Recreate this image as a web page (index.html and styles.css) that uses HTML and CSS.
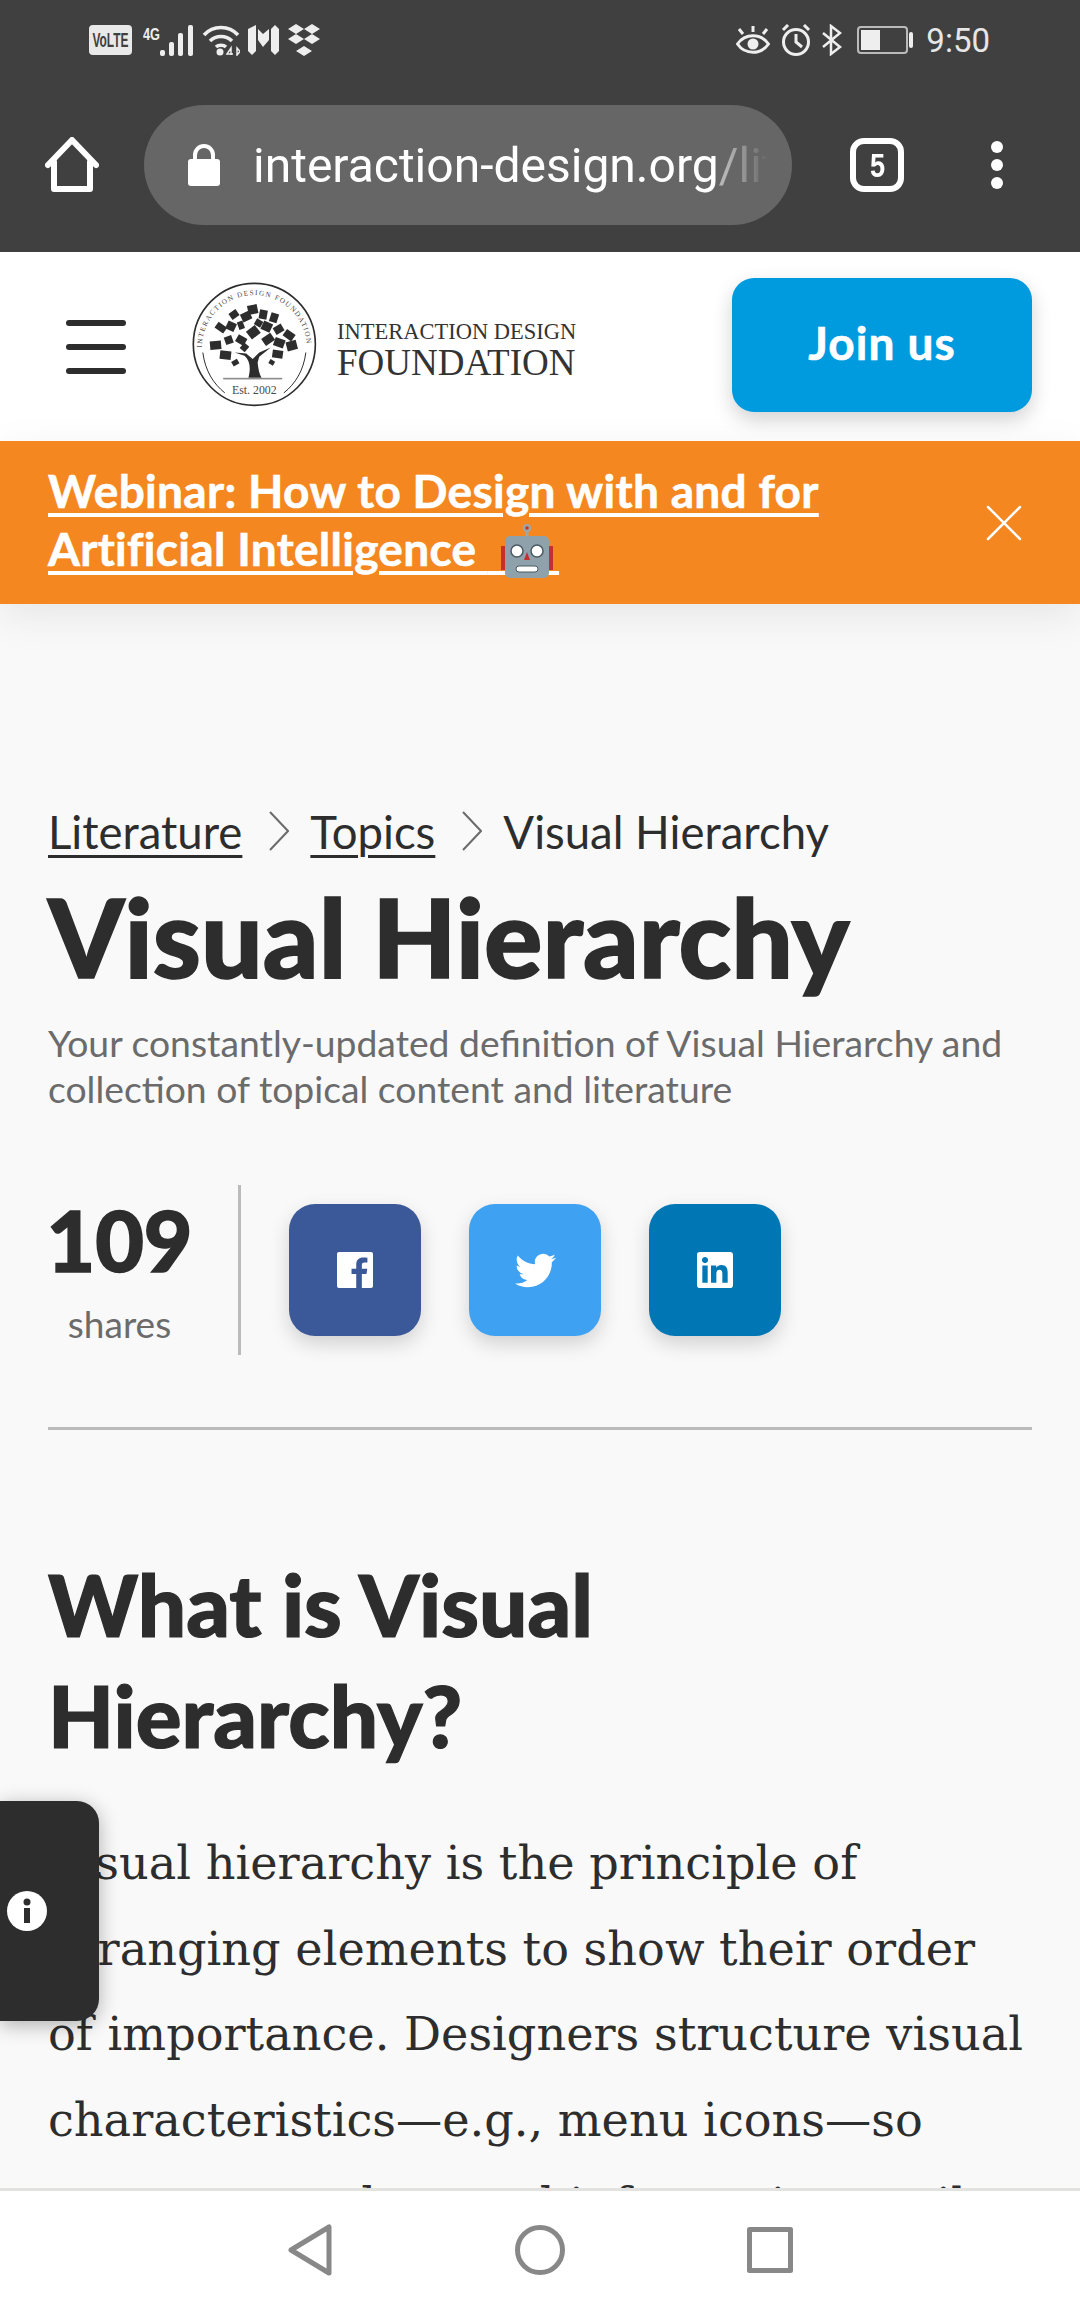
FILE: index.html
```html
<!DOCTYPE html>
<html lang="en">
<head>
  <meta charset="UTF-8">
  <title>Visual Hierarchy</title>
  <link rel="stylesheet" href="styles.css">
</head>
<body>

<div class="chrome">
  <div class="status-bar">
    <div class="status-left">
      <svg class="ico-volte" width="43" height="30" viewBox="0 0 43 30"><rect width="43" height="30" rx="4" fill="#e9e9e9"/><text x="21.5" y="22" text-anchor="middle" textLength="36" lengthAdjust="spacingAndGlyphs" class="volte-text">VoLTE</text></svg>
      <svg class="ico-signal" width="51" height="32" viewBox="0 0 51 32"><text x="0" y="16" textLength="17" lengthAdjust="spacingAndGlyphs" class="net-text">4G</text><rect x="17" y="26" width="5" height="6" rx="2" fill="#eee"/><rect x="26" y="18" width="5" height="14" rx="2" fill="#eee"/><rect x="35" y="9" width="5" height="23" rx="2" fill="#eee"/><rect x="45" y="1" width="5" height="31" rx="2" fill="#eee"/></svg>
      <svg class="ico-wifi" width="38" height="32" viewBox="0 0 38 32" fill="none" stroke="#eee" stroke-width="3.5"><path d="M2 11C11 1 27 1 36 11"/><path d="M8 17C14 11 24 11 30 17"/><path d="M14 23C16.500 20.500 21.500 20.500 24 23"/><circle cx="18" cy="28" r="3.500" fill="#eee" stroke="none"/><path d="M29 31V24l-4 6h6M35 24v7l3-3.500z" stroke-width="1.500"/></svg>
      <svg class="ico-m" width="31" height="30" viewBox="0 0 31 30"><path d="M0 4L8 0V26L4 30L0 26ZM10 4L15 9L21 4V15L15 22L10 15ZM23 4L27 0L31 4V26L27 30L23 26Z" fill="#eee"/></svg>
      <svg class="ico-drop" width="34" height="32" viewBox="0 0 34 32"><path d="M9 0L17 5L9 10L1 5ZM25 0L33 5L25 10L17 5ZM9 10L17 15L9 20L1 15ZM25 10L33 15L25 20L17 15ZM17 22L25 27L17 32L9 27Z" fill="#eee"/></svg>
    </div>
    <div class="status-right">
      <svg width="34" height="30" viewBox="0 0 34 30" fill="none" stroke="#eee" stroke-width="3"><path d="M1.500 19C9 8 25 8 32.500 19C25 30 9 30 1.500 19Z"/><circle cx="17" cy="19" r="5.500" fill="#eee" stroke="none"/><path d="M17 1V7M3 4L7 9M31 4L27 9"/></svg>
      <svg width="30" height="32" viewBox="0 0 30 32" fill="none" stroke="#eee" stroke-width="3"><circle cx="15" cy="18" r="12.500"/><path d="M15 10V18L21 23M2 6L7 1M28 6L23 1"/></svg>
      <svg width="20" height="32" viewBox="0 0 20 32" fill="none" stroke="#eee" stroke-width="2.500"><path d="M1 9L18 23L9 30V2L18 9L1 23"/></svg>
      <div class="battery"><div class="battery-level"></div></div>
      <span class="time">9:50</span>
    </div>
  </div>
  <div class="toolbar">
    <svg class="home" width="54" height="56" viewBox="0 0 54 56" fill="none" stroke="#fff" stroke-width="6" stroke-linecap="round" stroke-linejoin="round"><path d="M3 28L27 3L51 28"/><path d="M9 25V52H45V25"/></svg>
    <div class="url-pill">
      <svg class="lock" width="32" height="42" viewBox="0 0 32 42"><path d="M7 16V11a9 9 0 0 1 18 0v5" fill="none" stroke="#fff" stroke-width="4"/><rect y="15" width="32" height="27" rx="3" fill="#fff"/></svg>
      <div class="url"><span>interaction-design.org</span><span class="url-path">/literature</span></div>
    </div>
    <div class="tabs"><span>5</span></div>
    <div class="dots"><i></i><i></i><i></i></div>
  </div>
</div>

<header class="site-header">
  <div class="burger"><i></i><i></i><i></i></div>
  <div class="logo">
    <svg width="125" height="125" viewBox="0 0 381 381">
      <defs><path id="arc" d="M30 200A160 160 0 0 1 350 200"/></defs>
      <circle cx="190" cy="190" r="186" fill="none" stroke="#2d2d2d" stroke-width="5"/>
      <text class="seal-text"><textPath href="#arc" textLength="490">INTERACTION DESIGN FOUNDATION</textPath></text>
      <path d="M33 215C40 270 65 310 100 338M347 215C340 270 315 310 280 338" fill="none" stroke="#2d2d2d" stroke-width="3"/>
      <g fill="#2d2d2d">
        <path d="M172 292C180 260 176 240 160 225L130 215L165 218L185 235L205 215L240 200L205 228L200 245C202 265 205 280 212 292Z"/>
        <g id="books">
          <rect x="170" y="70" width="30" height="28" transform="rotate(-12 185 84)"/>
          <rect x="205" y="85" width="24" height="28" transform="rotate(10 217 99)"/>
          <rect x="238" y="95" width="24" height="28" transform="rotate(18 250 109)"/>
          <rect x="115" y="88" width="26" height="22" transform="rotate(-35 128 99)"/>
          <rect x="150" y="92" width="30" height="26" transform="rotate(-25 165 105)"/>
          <rect x="192" y="115" width="22" height="20" transform="rotate(30 203 125)"/>
          <rect x="72" y="128" width="32" height="22" transform="rotate(35 88 139)"/>
          <rect x="105" y="122" width="28" height="26" transform="rotate(25 119 135)"/>
          <rect x="140" y="120" width="18" height="24" transform="rotate(-20 149 132)"/>
          <rect x="213" y="122" width="30" height="28" transform="rotate(25 228 136)"/>
          <rect x="250" y="132" width="28" height="24" transform="rotate(-30 264 144)"/>
          <rect x="280" y="150" width="32" height="24" transform="rotate(35 296 162)"/>
          <rect x="170" y="138" width="34" height="30" transform="rotate(-38 187 153)"/>
          <rect x="135" y="165" width="30" height="24" transform="rotate(30 150 177)"/>
          <rect x="215" y="162" width="34" height="26" transform="rotate(-35 232 175)"/>
          <rect x="250" y="172" width="32" height="26" transform="rotate(20 266 185)"/>
          <rect x="55" y="180" width="34" height="26" transform="rotate(-5 72 193)"/>
          <rect x="100" y="165" width="24" height="24" transform="rotate(-20 112 177)"/>
          <rect x="288" y="180" width="32" height="28" transform="rotate(-15 304 194)"/>
          <rect x="85" y="210" width="34" height="26" transform="rotate(6 102 223)"/>
          <rect x="245" y="208" width="32" height="24" transform="rotate(8 261 220)"/>
          <rect x="122" y="238" width="20" height="16" transform="rotate(-30 132 246)"/>
          <rect x="235" y="238" width="16" height="14" transform="rotate(30 243 245)"/>
          <rect x="150" y="188" width="20" height="22" transform="rotate(40 160 199)"/>
        </g>
      </g>
      <rect x="95" y="292" width="180" height="5" fill="#8c8c8c"/>
      <text x="190" y="342" text-anchor="middle" class="seal-est">Est. 2002</text>
    </svg>
    <div class="logo-name">
      <span class="logo-top">INTERACTION DESIGN</span>
      <span class="logo-bottom">FOUNDATION</span>
    </div>
  </div>
  <a class="join">Join us</a>
</header>

<div class="banner">
  <a class="banner-link">Webinar: How to Design with and for Artificial Intelligence <span class="emoji">&nbsp;<svg width="54" height="54" viewBox="0 0 54 54"><path d="M27 12V4" stroke="#9aa7ad" stroke-width="3"/><circle cx="27" cy="4" r="4" fill="#9aa7ad"/><circle cx="27" cy="4" r="1.800" fill="#c0392b"/><rect x="1" y="22" width="8" height="24" fill="#c62f2f"/><rect x="45" y="22" width="8" height="24" fill="#c62f2f"/><rect x="5" y="12" width="44" height="42" rx="5" fill="#8fa1ab"/><circle cx="17" cy="27" r="6" fill="#fff" stroke="#4b5a63" stroke-width="1.500"/><circle cx="37" cy="27" r="6" fill="#fff" stroke="#4b5a63" stroke-width="1.500"/><path d="M27 28L30 36H24Z" fill="#c62f2f"/><rect x="16" y="42" width="22" height="6" rx="3" fill="#fff" stroke="#4b5a63"/></svg></span></a>
  <svg class="close" width="36" height="36" viewBox="0 0 36 36" stroke="#fff" stroke-width="2.500" stroke-linecap="round"><path d="M2 2L34 34M34 2L2 34"/></svg>
</div>

<main class="page">
  <nav class="crumbs">
    <a>Literature</a>
    <svg class="chevron" width="20" height="40" viewBox="0 0 20 40" fill="none" stroke="#6b6b6b" stroke-width="2"><path d="M1 1L19 20L1 39"/></svg>
    <a>Topics</a>
    <svg class="chevron" width="20" height="40" viewBox="0 0 20 40" fill="none" stroke="#6b6b6b" stroke-width="2"><path d="M1 1L19 20L1 39"/></svg>
    <span>Visual Hierarchy</span>
  </nav>
  <h1>Visual Hierarchy</h1>
  <p class="lead">Your constantly-updated definition of Visual Hierarchy and collection of topical content and literature</p>

  <div class="share">
    <div class="share-count"><strong>109</strong><span>shares</span></div>
    <a class="social fb"><svg width="36" height="36" viewBox="0 0 24 24" fill="#fff"><path d="M22.675 0H1.325C.593 0 0 .593 0 1.325v21.351C0 23.407.593 24 1.325 24H12.820v-9.294H9.692v-3.622h3.128V8.413c0-3.100 1.893-4.788 4.659-4.788 1.325 0 2.463.099 2.795.143v3.240l-1.918.001c-1.504 0-1.795.715-1.795 1.763v2.313h3.587l-.467 3.622h-3.120V24h6.116c.730 0 1.323-.593 1.323-1.325V1.325C24 .593 23.407 0 22.675 0z"/></svg></a>
    <a class="social tw"><svg width="41" height="41" viewBox="0 0 24 24" fill="#fff"><path d="M23.953 4.570a10 10 0 01-2.825.775 4.958 4.958 0 002.163-2.723c-.951.555-2.005.959-3.127 1.184a4.920 4.920 0 00-8.384 4.482C7.690 8.095 4.067 6.130 1.640 3.162a4.822 4.822 0 00-.666 2.475c0 1.710.870 3.213 2.188 4.096a4.904 4.904 0 01-2.228-.616v.060a4.923 4.923 0 003.946 4.827 4.996 4.996 0 01-2.212.085 4.936 4.936 0 004.604 3.417 9.867 9.867 0 01-6.102 2.105c-.390 0-.779-.023-1.170-.067a13.995 13.995 0 007.557 2.209c9.053 0 13.998-7.496 13.998-13.985 0-.210 0-.420-.015-.630A9.935 9.935 0 0024 4.590z"/></svg></a>
    <a class="social li"><svg width="36" height="36" viewBox="0 0 24 24" fill="#fff"><path d="M20.447 20.452h-3.554v-5.569c0-1.328-.027-3.037-1.852-3.037-1.853 0-2.136 1.445-2.136 2.939v5.667H9.351V9h3.414v1.561h.046c.477-.900 1.637-1.850 3.370-1.850 3.601 0 4.267 2.370 4.267 5.455v6.286zM5.337 7.433c-1.144 0-2.063-.926-2.063-2.065 0-1.138.920-2.063 2.063-2.063 1.140 0 2.064.925 2.064 2.063 0 1.139-.925 2.065-2.064 2.065zm1.782 13.019H3.555V9h3.564v11.452zM22.225 0H1.771C.792 0 0 .774 0 1.729v20.542C0 23.227.792 24 1.771 24h20.451C23.200 24 24 23.227 24 22.271V1.729C24 .774 23.200 0 22.222 0h.003z"/></svg></a>
  </div>
  <hr class="rule">

  <h2>What is Visual<br>Hierarchy?</h2>
  <p class="body-text">Visual hierarchy is the principle of<br>arranging elements to show their order<br>of importance. Designers structure visual<br>characteristics—e.g., menu icons—so<br>users can understand information easily</p>

  <div class="info-tab">
    <svg width="40" height="40" viewBox="0 0 40 40"><circle cx="20" cy="20" r="20" fill="#fff"/><circle cx="20" cy="11" r="3.500" fill="#2d2d2d"/><rect x="17" y="17" width="6" height="15" fill="#2d2d2d"/></svg>
  </div>
</main>

<footer class="nav-bar">
  <svg width="44" height="52" viewBox="0 0 44 52" fill="none" stroke="#888" stroke-width="5" stroke-linejoin="round"><path d="M41 3V49L3 26Z"/></svg>
  <svg width="50" height="50" viewBox="0 0 50 50" fill="none" stroke="#888" stroke-width="5"><circle cx="25" cy="25" r="22.500"/></svg>
  <svg width="46" height="46" viewBox="0 0 46 46" fill="none" stroke="#888" stroke-width="5" stroke-linejoin="round"><rect x="2.500" y="2.500" width="41" height="41"/></svg>
</footer>

</body>
</html>
```

FILE: styles.css
```css
* {
  box-sizing: border-box;
}

html, body {
  margin: 0;
  height: 2312px;
}

body {
  width: 1080px;
  overflow: hidden;
  display: flex;
  flex-direction: column;
  font-family: Lato, "Noto Sans", sans-serif;
  background: #f9f9f9;
  color: #2d2d2d;
}

a {
  color: inherit;
}

/* Android + browser chrome */
.chrome {
  background: #404040;
  height: 252px;
  flex: none;
  color: #fff;
}

.status-bar {
  height: 78px;
  padding: 2px 90px 0 89px;
  display: flex;
  justify-content: space-between;
  align-items: center;
}

.status-left, .status-right {
  display: flex;
  align-items: center;
}

.status-left {
  gap: 8px;
}

.status-right {
  gap: 11px;
}

.volte-text {
  font: 700 21px "Liberation Sans", sans-serif;
  fill: #404040;
}

.net-text {
  font: 700 17px "Liberation Sans", sans-serif;
  fill: #eee;
}

.ico-signal {
  margin-left: 3px;
}

.battery {
  position: relative;
  width: 51px;
  height: 28px;
  border: 2px solid #bbb;
  border-radius: 4px;
  padding: 2px;
  margin: 0 7px 0 4px;
}

.battery::after {
  content: "";
  position: absolute;
  left: 50px;
  top: 4px;
  width: 4px;
  height: 16px;
  background: #eee;
  border-radius: 2px;
}

.battery-level {
  width: 19px;
  height: 100%;
  background: #eee;
}

.time {
  font: 400 33px Roboto, sans-serif;
  color: #e6e6e6;
}

.toolbar {
  height: 174px;
  padding-left: 45px;
  display: flex;
  align-items: center;
}

.home {
  flex: none;
}

.url-pill {
  width: 648px;
  height: 120px;
  margin-left: 45px;
  padding: 0 24px 0 44px;
  border-radius: 60px;
  background: #666;
  display: flex;
  align-items: center;
  gap: 33px;
}

.lock {
  flex: none;
}

.url {
  font: 400 48px Roboto, sans-serif;
  white-space: nowrap;
  overflow: hidden;
  flex: 1;
  -webkit-mask-image: linear-gradient(to right, #000 92%, transparent 100%);
  mask-image: linear-gradient(to right, #000 92%, transparent 100%);
}

.url-path {
  color: #b5b5b5;
}

.tabs {
  width: 54px;
  height: 54px;
  margin-left: 58px;
  border: 6px solid #fff;
  border-radius: 14px;
  display: flex;
  align-items: center;
  justify-content: center;
  font: 700 34px "Liberation Sans", sans-serif;
}

.tabs span {
  display: inline-block;
  transform: scaleX(0.8);
}

.dots {
  margin-left: 87px;
  display: flex;
  flex-direction: column;
  gap: 6px;
}

.dots i {
  display: block;
  width: 12px;
  height: 12px;
  border-radius: 50%;
  background: #fff;
}

/* Site header */
.site-header {
  flex: none;
  height: 189px;
  background: #fff;
  display: flex;
  align-items: center;
  padding: 0 48px 0 66px;
}

.burger {
  width: 60px;
  display: flex;
  flex-direction: column;
  gap: 18px;
}

.burger i {
  display: block;
  height: 6px;
  border-radius: 3px;
  background: #2d2d2d;
}

.logo {
  display: flex;
  align-items: center;
  margin-left: 66px;
  margin-bottom: 5px;
  gap: 20px;
}

.logo svg {
  display: block;
}

.seal-text {
  font: 400 22px "Liberation Serif", serif;
  fill: #4a4a4a;
}

.seal-est {
  font: 400 36px "Liberation Serif", serif;
  fill: #4a4a4a;
}

.logo-name {
  display: flex;
  flex-direction: column;
  margin-top: 14px;
  font-family: "Liberation Serif", serif;
  color: #333;
  line-height: 1;
}

.logo-top {
  font-size: 22.5px;
}

.logo-bottom {
  font-size: 37px;
}

.join {
  margin-left: auto;
  margin-bottom: 3px;
  padding-bottom: 5px;
  width: 300px;
  height: 134px;
  border-radius: 22px;
  background: #009bdf;
  color: #fff;
  font-size: 46px;
  font-weight: 700;
  letter-spacing: 1px;
  -webkit-text-stroke: 0.6px #fff;
  display: flex;
  align-items: center;
  justify-content: center;
  box-shadow: 0 8px 20px rgba(0, 0, 0, 0.18);
}

/* Orange banner */
.banner {
  flex: none;
  position: relative;
  z-index: 2;
  height: 163px;
  background: #f58720;
  color: #fff;
  padding: 21px 150px 0 48px;
  box-shadow: 0 12px 40px rgba(0, 0, 0, 0.08);
}

.banner-link {
  font-size: 46px;
  line-height: 58px;
  font-weight: 700;
  letter-spacing: 0.3px;
  -webkit-text-stroke: 0.6px #fff;
  text-decoration: underline;
  text-decoration-thickness: 4px;
  text-underline-offset: 5px;
}

.emoji {
  position: relative;
  letter-spacing: 60px;
}

.emoji svg {
  position: absolute;
  left: 12px;
  bottom: -2px;
}

.close {
  position: absolute;
  right: 58px;
  top: 64px;
}

/* Main content */
.page {
  flex: 1;
  position: relative;
  overflow: hidden;
  padding: 0 48px;
}

.crumbs {
  margin-top: 199px;
  height: 56px;
  display: flex;
  align-items: center;
  gap: 24px;
  font-size: 45.500px;
}

.crumbs a {
  text-decoration: underline;
  text-decoration-thickness: 3px;
  text-underline-offset: 6px;
}

.chevron {
  margin: 0 -3px 0 3px;
}

h1 {
  margin: 14px 0 0;
  font-size: 109px;
  line-height: 125px;
  font-weight: 900;
  -webkit-text-stroke: 1.500px #2d2d2d;
}

.lead {
  margin: 22px 0 0;
  font-size: 37.300px;
  line-height: 46px;
  color: #6b6b6b;
}

.share {
  margin-top: 73px;
  height: 170px;
  display: flex;
  align-items: center;
}

.share-count {
  width: 193px;
  height: 170px;
  padding-right: 47px;
  border-right: 3px solid #bbb;
  display: flex;
  flex-direction: column;
  align-items: center;
}

.share-count strong {
  font-size: 84px;
  line-height: 110px;
  font-weight: 900;
  -webkit-text-stroke: 1.500px #2d2d2d;
}

.share-count span {
  margin-top: 6px;
  font-size: 37px;
  line-height: 46px;
  color: #6b6b6b;
}

.social {
  width: 132px;
  height: 132px;
  margin-left: 48px;
  border-radius: 26px;
  display: flex;
  align-items: center;
  justify-content: center;
  box-shadow: 0 8px 20px rgba(0, 0, 0, 0.16);
}

.fb { background: #3b5998; }
.tw { background: #3ea1f2; }
.li { background: #0077b5; }

.rule {
  margin: 72px 0 0;
  border: 0;
  height: 3px;
  background: #bbb;
}

h2 {
  margin: 119px 0 0;
  font-size: 85.500px;
  line-height: 111px;
  font-weight: 900;
  -webkit-text-stroke: 1.200px #2d2d2d;
}

.body-text {
  margin: 50px 0 0;
  font-family: "DejaVu Serif", serif;
  font-size: 46.200px;
  line-height: 85.500px;
  white-space: nowrap;
}

.info-tab {
  position: absolute;
  left: 0;
  top: 1197px;
  width: 99px;
  height: 220px;
  border-radius: 0 22px 22px 0;
  background: #2d2d2d;
  padding-left: 7px;
  display: flex;
  align-items: center;
  box-shadow: 0 4px 20px rgba(0, 0, 0, 0.3);
}

/* Android nav */
.nav-bar {
  flex: none;
  height: 124px;
  background: #fff;
  border-top: 3px solid #e2e2e0;
  padding-bottom: 3px;
  display: grid;
  grid-template-columns: repeat(3, 230px);
  justify-content: center;
  justify-items: center;
  align-items: center;
}
```
